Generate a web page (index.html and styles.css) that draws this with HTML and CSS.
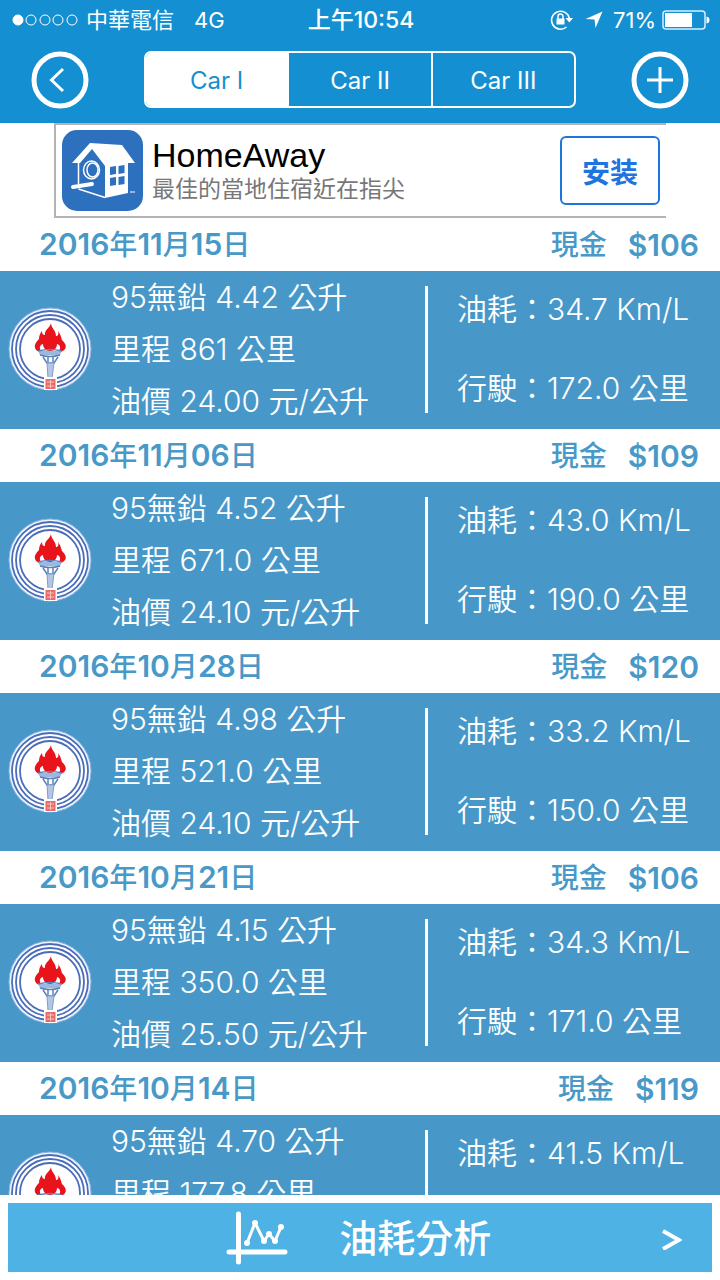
FILE: index.html
```html
<!DOCTYPE html>
<html lang="zh-Hant-TW">
<head>
  <meta charset="UTF-8" />
  <meta name="viewport" content="width=device-width, initial-scale=1.0"/>
  <title>油耗紀錄</title>
  <link rel="stylesheet" href="styles.css">
</head>
<body>
  <header>
    <div class="status-bar">
      <div class="status-left">
        <svg class="signal" width="66" height="12" viewBox="0 0 66 12" fill="none" stroke="#fff">
          <circle cx="6" cy="6" r="5" fill="#fff"/>
          <circle cx="19" cy="6" r="5"/>
          <circle cx="33" cy="6" r="5"/>
          <circle cx="46" cy="6" r="5"/>
          <circle cx="60" cy="6" r="5"/>
        </svg>
        <span>中華電信</span>
        <span class="network">4G</span>
      </div>
      <div class="clock">上午10:54</div>
      <div class="status-right">
        <svg width="24" height="22" viewBox="0 0 24 22">
          <path d="M16.500 18A9 9 0 1 1 19.300 9" fill="none" stroke="#fff" stroke-width="1.600"/>
          <path d="M15.500 9h7.500l-3.700 4.500z" fill="#fff"/>
          <rect x="6.500" y="9.500" width="8" height="6" rx="0.500" fill="#fff"/>
          <path d="M8 10V7.500a2.500 2.500 0 0 1 5 0v2.500" fill="none" stroke="#fff" stroke-width="1.500"/>
        </svg>
        <svg class="location" width="18" height="18" viewBox="0 0 18 18">
          <path d="M17.500 0.500L10.500 17L9.500 8.500L0.500 8z" fill="#fff"/>
        </svg>
        <span>71%</span>
        <svg class="battery" width="48" height="20" viewBox="0 0 48 20">
          <rect x="1" y="1" width="42" height="18" rx="3" fill="none" stroke="#d3f0ff" stroke-width="1.500"/>
          <rect x="3" y="3" width="27" height="14" fill="#fff"/>
          <path d="M44.500 6.500q3 0.500 3 3.500t-3 3.500z" fill="#fff"/>
        </svg>
      </div>
    </div>

    <nav class="nav-bar">
      <button class="round-btn" aria-label="返回">
        <svg width="58" height="58" viewBox="0 0 58 58" fill="none" stroke="#fff">
          <circle cx="29" cy="29" r="26" stroke-width="5"/>
          <path d="M32 18L20.500 29L32 40" stroke-width="3"/>
        </svg>
      </button>
      <div class="tabs">
        <button class="tab active">Car I</button>
        <button class="tab">Car II</button>
        <button class="tab">Car III</button>
      </div>
      <button class="round-btn" aria-label="新增">
        <svg width="58" height="58" viewBox="0 0 58 58" fill="none" stroke="#fff">
          <circle cx="29" cy="29" r="26" stroke-width="5"/>
          <path d="M29 16v26M16 29h26" stroke-width="3"/>
        </svg>
      </button>
    </nav>
  </header>

  <aside class="ad">
    <svg class="ad-icon" width="81" height="81" viewBox="0 0 81 81">
      <rect width="81" height="81" rx="15" fill="#2d70bd"/>
      <path d="M28 13L60 15L73 33H66V63L43 68V36L30 19L18 33H10z" fill="#fff"/>
      <path d="M16.500 33V54M16.500 59L43 67.500" fill="none" stroke="#fff" stroke-width="1.500"/>
      <ellipse cx="29.500" cy="40" rx="8" ry="9" fill="none" stroke="#fff" stroke-width="1.500"/>
      <ellipse cx="30.500" cy="40" rx="5.500" ry="7" fill="none" stroke="#fff" stroke-width="1.500"/>
      <path d="M11 57L30 54" stroke="#fff" stroke-width="4" stroke-linecap="round"/>
      <path d="M48 37l6-1v8l-6 1zM56.500 36l6-1v8l-6 1zM48 48l6-1v8l-6 1zM56.500 47l6-1v8l-6 1z" fill="#2d70bd"/>
      <path d="M68 62h5" stroke="#fff" stroke-width="1"/>
    </svg>
    <div class="ad-text">
      <div class="ad-title">HomeAway</div>
      <div class="ad-desc">最佳的當地住宿近在指尖</div>
    </div>
    <button class="install-btn" lang="zh-Hans">安装</button>
  </aside>

  <main id="records"></main>

  <footer>
    <button class="analysis-btn">
      <svg class="chart-icon" width="62" height="54" viewBox="0 0 62 54" fill="none" stroke="#fff" stroke-linecap="round" stroke-linejoin="round">
        <path d="M12.500 3v48M3 41h56" stroke-width="5"/>
        <path d="M21 32L29 12L38 30L43 23L49 30L55 16" stroke-width="3"/>
        <g fill="#fff" stroke="none">
          <circle cx="21" cy="32" r="3"/>
          <circle cx="29" cy="12" r="3"/>
          <circle cx="38" cy="30" r="3"/>
          <circle cx="43" cy="23" r="3"/>
          <circle cx="49" cy="30" r="3"/>
          <circle cx="55" cy="16" r="3"/>
        </g>
      </svg>
      <span class="analysis-label">油耗分析</span>
      <svg class="arrow" width="20" height="24" viewBox="0 0 20 24" fill="none" stroke="#fff" stroke-width="4">
        <path d="M1 5L17 14L1 23"/>
      </svg>
    </button>
  </footer>

  <!-- Station logo, shared by every record -->
  <svg width="0" height="0" class="defs">
    <symbol id="torch" viewBox="0 0 84 84">
      <circle cx="42" cy="42" r="41" fill="#eef4fc" stroke="#8db4e0" stroke-width="1"/>
      <circle cx="42" cy="42" r="38" fill="#fff" stroke="#4a6dba" stroke-width="1.800"/>
      <circle cx="42" cy="42" r="34" fill="#fff" stroke="#4a6dba" stroke-width="1.800"/>
      <circle cx="42" cy="42" r="30" fill="#fff" stroke="#4a6dba" stroke-width="1.800"/>
      <path d="M43 16c0 5 5 7 5 13 2 0 3-2 2-5 3 4 3 6 4 9 3 3 5 6 3 9-1 2-4 3-7 3 3-3 3-7-1-8 0 4-3 7-7 7s-7-3-7-7c-4 1-4 5-1 8-3 0-6-1-7-4-1-3 1-6 4-9 0-3 1-6 3-8 0 3 1 4 3 4-1-5 5-7 6-12z" fill="#e8131b"/>
      <path d="M30 44h24l-2 4H32z" fill="#9db8de"/>
      <path d="M30 44q12-3 24 0M32 48q10 3 20 0M35 50l4 6h7l4-6" fill="none" stroke="#5b80bb" stroke-width="1.500"/>
      <path d="M39 56l1 15h4l2-15z" fill="#b3c6e4" stroke="#7f9dcc" stroke-width="1"/>
      <path d="M40 49v6M45 49v6" stroke="#5b80bb" stroke-width="1.500"/>
      <rect x="36" y="70" width="13" height="13" fill="#fff"/>
      <rect x="37.500" y="72" width="10" height="10" fill="#e96a66"/>
      <path d="M39 75h7M39 79h7M42.500 73v8" stroke="#f7c4c0" stroke-width="1"/>
    </symbol>
  </svg>

  <script>
    const records = [
      { date: '2016年11月15日', cost: 106, litres: '4.42', mileage: '861', price: '24.00', rate: '34.7', distance: '172.0' },
      { date: '2016年11月06日', cost: 109, litres: '4.52', mileage: '671.0', price: '24.10', rate: '43.0', distance: '190.0' },
      { date: '2016年10月28日', cost: 120, litres: '4.98', mileage: '521.0', price: '24.10', rate: '33.2', distance: '150.0' },
      { date: '2016年10月21日', cost: 106, litres: '4.15', mileage: '350.0', price: '25.50', rate: '34.3', distance: '171.0' },
      { date: '2016年10月14日', cost: 119, litres: '4.70', mileage: '177.8', rate: '41.5' }
    ];

    function renderRecord(r) {
      const date = r.date.replace(/\d+/g, '<b>$&</b>');
      const price = r.price ? `<div>油價 ${r.price} 元/公升</div>` : '';
      const distance = r.distance ? `<div>行駛：${r.distance} 公里</div>` : '';
      return `
        <section class="record">
          <h2 class="record-head">
            <span class="date">${date}</span>
            <span class="pay">現金</span>
            <b>$${r.cost}</b>
          </h2>
          <div class="record-body">
            <svg class="logo" width="84" height="84"><use href="#torch"/></svg>
            <div class="fuel">
              <div>95無鉛 ${r.litres} 公升</div>
              <div>里程 ${r.mileage} 公里</div>
              ${price}
            </div>
            <div class="usage">
              <div>油耗：${r.rate} Km/L</div>
              ${distance}
            </div>
          </div>
        </section>`;
    }

    document.getElementById('records').innerHTML = records.map(renderRecord).join('');
  </script>
</body>
</html>
```
FILE: styles.css
```css
* {
  box-sizing: border-box;
}

body {
  margin: 0;
  height: 100vh;
  display: flex;
  flex-direction: column;
  overflow: hidden;
  background: #fff;
  color: white;
  font-family: Inter, "Noto Sans CJK TC", sans-serif;
}

button {
  padding: 0;
  border: none;
  background: none;
  color: inherit;
  font-family: inherit;
  cursor: pointer;
}

svg {
  display: block;
  flex: none;
}

.defs {
  position: absolute;
}

header {
  flex: none;
  background: #148fd1;
}

/* Status bar */
.status-bar {
  display: grid;
  grid-template-columns: 1fr auto 1fr;
  align-items: center;
  height: 40px;
  padding: 0 10px 0 12px;
  font-size: 22px;
  line-height: 40px;
}

.status-left,
.status-right {
  display: flex;
  align-items: center;
}

.status-right {
  justify-content: flex-end;
}

.signal {
  margin-right: 8px;
}

.network {
  margin-left: 20px;
}

.clock {
  font-size: 23px;
  font-weight: 500;
}

.location {
  margin: 0 10px 0 11px;
}

.battery {
  margin-left: 6px;
}

/* Navigation */
.nav-bar {
  display: flex;
  align-items: center;
  height: 83px;
  padding: 0 31px 4px;
}

.tabs {
  flex: 1;
  display: flex;
  height: 57px;
  margin: 0 55px;
  border: 2px solid #fff;
  border-radius: 7px;
  overflow: hidden;
}

.tab {
  flex: 1;
  padding-top: 2px;
  font-size: 24px;
}

.tab + .tab {
  border-left: 2px solid #fff;
}

.tab.active {
  background: #fff;
  color: #148fd1;
}

/* Ad banner */
.ad {
  flex: none;
  display: flex;
  align-items: center;
  height: 95px;
  margin: 0 54px;
  padding: 0 6px;
  border: 2px solid #b3b3b3;
  border-right: none;
}

.ad-text {
  flex: 1;
  margin-left: 9px;
}

.ad-title {
  color: #000;
  font-family: "Liberation Sans", sans-serif;
  font-size: 34px;
  line-height: 36px;
}

.ad-desc {
  color: #777;
  font-size: 23px;
  line-height: 32px;
}

.install-btn {
  width: 100px;
  height: 69px;
  border: 2px solid #1f75df;
  border-radius: 6px;
  color: #1f75df;
  font-family: "Noto Sans CJK SC", sans-serif;
  font-size: 28px;
  font-weight: 700;
}

/* Records */
#records {
  flex: 1;
  min-height: 0;
  overflow: hidden;
}

.record-head {
  display: flex;
  align-items: center;
  height: 53px;
  margin: 0;
  padding: 0 21px 0 39px;
  color: #4899c8;
  font-size: 28px;
  font-weight: 500;
  line-height: 52px;
}

.record-head b {
  font-size: 30px;
  font-weight: 600;
}

.date {
  flex: 1;
}

.pay {
  margin-right: 21px;
}

.record-body {
  display: flex;
  align-items: center;
  height: 158px;
  padding: 0 0 2px 8px;
  background: #4798c9;
  font-size: 30px;
  font-weight: 350;
  white-space: nowrap;
}

.logo {
  margin-right: 19px;
}

.fuel {
  flex: 1;
  height: 156px;
  line-height: 52px;
}

.usage {
  width: 295px;
  height: 127px;
  display: flex;
  flex-direction: column;
  gap: 33px;
  border-left: 3px solid #fff;
  padding-left: 29px;
  line-height: 46px;
}

/* Bottom button */
footer {
  flex: none;
  padding: 8px;
}

.analysis-btn {
  display: flex;
  align-items: center;
  width: 100%;
  height: 69px;
  padding: 0 30px 0 31%;
  background: #4eb2e5;
}

.analysis-label {
  flex: 1;
  margin-left: 51px;
  font-size: 38px;
  font-weight: 500;
  line-height: 56px;
  text-align: left;
}
```
